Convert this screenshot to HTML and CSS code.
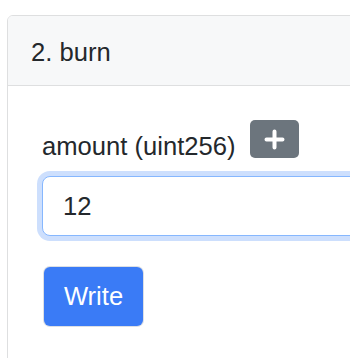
FILE: index.html
```html
<!DOCTYPE html>
<html>
<head>
<meta charset="utf-8">
<link rel="stylesheet" href="styles.css">
</head>
<body>
<div class="card">
  <div class="card-header">2. burn</div>
  <div class="card-body">
    <div class="label-row">
      <label class="label">amount (uint256)</label>
      <button class="btn-add" type="button" aria-label="add">
        <svg width="21" height="21" viewBox="0 0 21 21"><path d="M10.5 2.5v16M2.5 10.5h16" stroke="#fff" stroke-width="4" stroke-linecap="round"/></svg>
      </button>
    </div>
    <input class="input" type="text" value="12">
    <button class="btn-write" type="button">Write</button>
  </div>
</div>
</body>
</html>
```

FILE: styles.css
```css
html, body {
  margin: 0;
  padding: 0;
  background: #ffffff;
  overflow: hidden;
}
body {
  font-family: "Liberation Sans", Arial, sans-serif;
  color: #24282c;
}
.card {
  margin: 15px 0 0 7px;
  width: 420px;
  height: 400px;
  border: 1px solid #dedfe0;
  border-radius: 6px;
  overflow: hidden;
}
.card-header {
  height: 70px;
  box-sizing: border-box;
  padding: 17px 23px 15px;
  font-size: 25.6px;
  line-height: 38px;
  background: #f7f8f9;
  border-bottom: 1px solid #dedfe0;
}
.card-body {
  padding: 34px 34px 0 34px;
  display: flex;
  flex-direction: column;
  align-items: flex-start;
}
.label-row {
  display: flex;
  align-items: flex-start;
  gap: 14px;
}
.label {
  font-size: 25.6px;
  line-height: 38px;
  margin-top: 7px;
}
.btn-add {
  width: 49px;
  height: 38px;
  border: none;
  border-radius: 5px;
  background: #6c757d;
  display: flex;
  align-items: center;
  justify-content: center;
  padding: 0;
}
.input {
  margin-top: 11px;
  width: 380px;
  height: 60px;
  box-sizing: border-box;
  border: 1.5px solid #86b7fe;
  border-radius: 8px;
  box-shadow: 0 0 0 5px #cddffd;
  padding: 0 20px;
  font-family: inherit;
  font-size: 25.6px;
  color: #24282c;
  outline: none;
}
.btn-write {
  margin-top: 31px;
  margin-left: 2px;
  width: 99px;
  height: 59px;
  border: none;
  border-radius: 6px;
  background: #3a7bf6;
  color: #ffffff;
  font-family: inherit;
  font-size: 25.6px;
  box-shadow: 0 0 0 1px #dcdfe4;
  padding: 0;
}
```
